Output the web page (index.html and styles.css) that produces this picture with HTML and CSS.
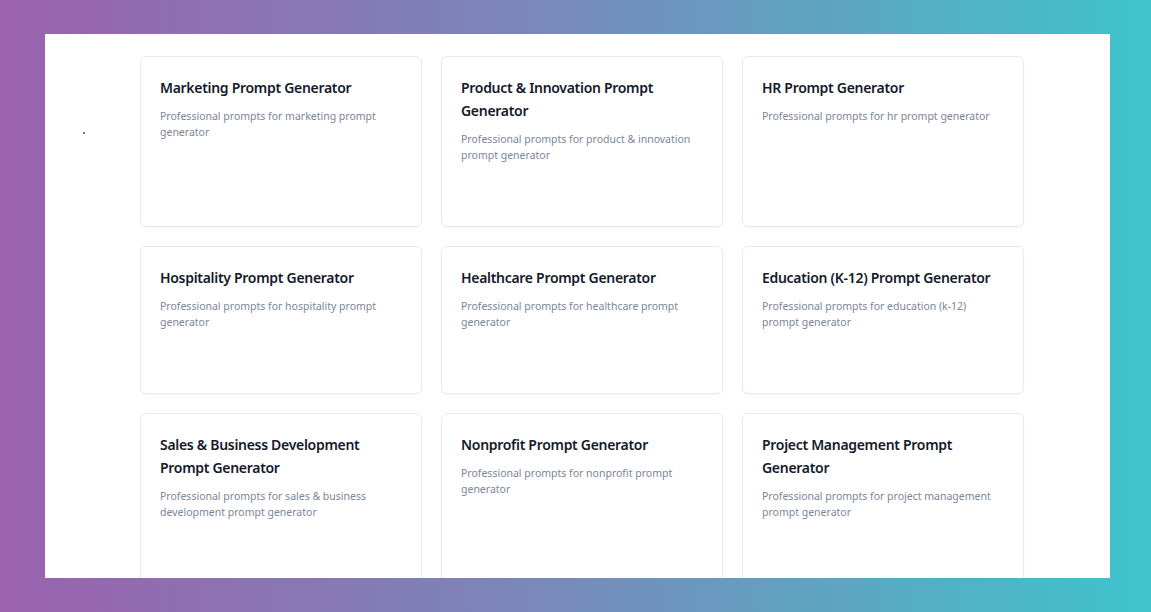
FILE: index.html
```html
<!DOCTYPE html>
<html lang="en">
<head>
    <meta charset="UTF-8">
    <meta name="viewport" content="width=device-width, initial-scale=1.0">
    <title>Prompt Generators</title>
    <link rel="stylesheet" href="styles.css">
</head>
<body>

<div class="panel">
    <span class="dot"></span>
    <div class="generator-list">
        <div class="generator">
            <h3>Marketing Prompt Generator</h3>
            <p>Professional prompts for marketing prompt generator</p>
        </div>
        <div class="generator">
            <h3>Product &amp; Innovation Prompt Generator</h3>
            <p>Professional prompts for product &amp; innovation prompt generator</p>
        </div>
        <div class="generator">
            <h3>HR Prompt Generator</h3>
            <p>Professional prompts for hr prompt generator</p>
        </div>
        <div class="generator">
            <h3>Hospitality Prompt Generator</h3>
            <p>Professional prompts for hospitality prompt generator</p>
        </div>
        <div class="generator">
            <h3>Healthcare Prompt Generator</h3>
            <p>Professional prompts for healthcare prompt generator</p>
        </div>
        <div class="generator">
            <h3>Education (K-12) Prompt Generator</h3>
            <p>Professional prompts for education (k-12) prompt generator</p>
        </div>
        <div class="generator">
            <h3>Sales &amp; Business Development Prompt Generator</h3>
            <p>Professional prompts for sales &amp; business development prompt generator</p>
        </div>
        <div class="generator">
            <h3>Nonprofit Prompt Generator</h3>
            <p>Professional prompts for nonprofit prompt generator</p>
        </div>
        <div class="generator">
            <h3>Project Management Prompt Generator</h3>
            <p>Professional prompts for project management prompt generator</p>
        </div>
    </div>
</div>

</body>
</html>
```

FILE: styles.css
```css
html, body {
    height: 100%;
}
body {
    font-family: "Noto Sans", "Open Sans", sans-serif;
    margin: 0;
    padding: 34px 41px 34px 45px;
    box-sizing: border-box;
    background: linear-gradient(90deg, #9b61ae 0%, #7b86ba 45%, #3fc4cd 100%);
}
.panel {
    position: relative;
    height: 100%;
    background-color: #fff;
    overflow: hidden;
    padding: 22px 0 0 95px;
    box-sizing: border-box;
}
.dot {
    position: absolute;
    left: 38px;
    top: 98px;
    width: 2px;
    height: 2px;
    background-color: #777;
}
.generator-list {
    display: grid;
    grid-template-columns: repeat(3, 282px);
    gap: 19px 19px;
}
.generator {
    border: 1px solid #e5eaf2;
    border-radius: 6px;
    padding: 19px 19px 63px;
    box-shadow: 0 1px 2px rgba(30, 50, 90, 0.04);
}
.generator h3 {
    margin: 0 0 9px 0;
    font-size: 14px;
    line-height: 23px;
    font-weight: 600;
    letter-spacing: -0.3px;
    color: #141a2b;
}
.generator p {
    margin: 0;
    font-size: 10.5px;
    line-height: 16px;
    color: #7a8699;
}
```
